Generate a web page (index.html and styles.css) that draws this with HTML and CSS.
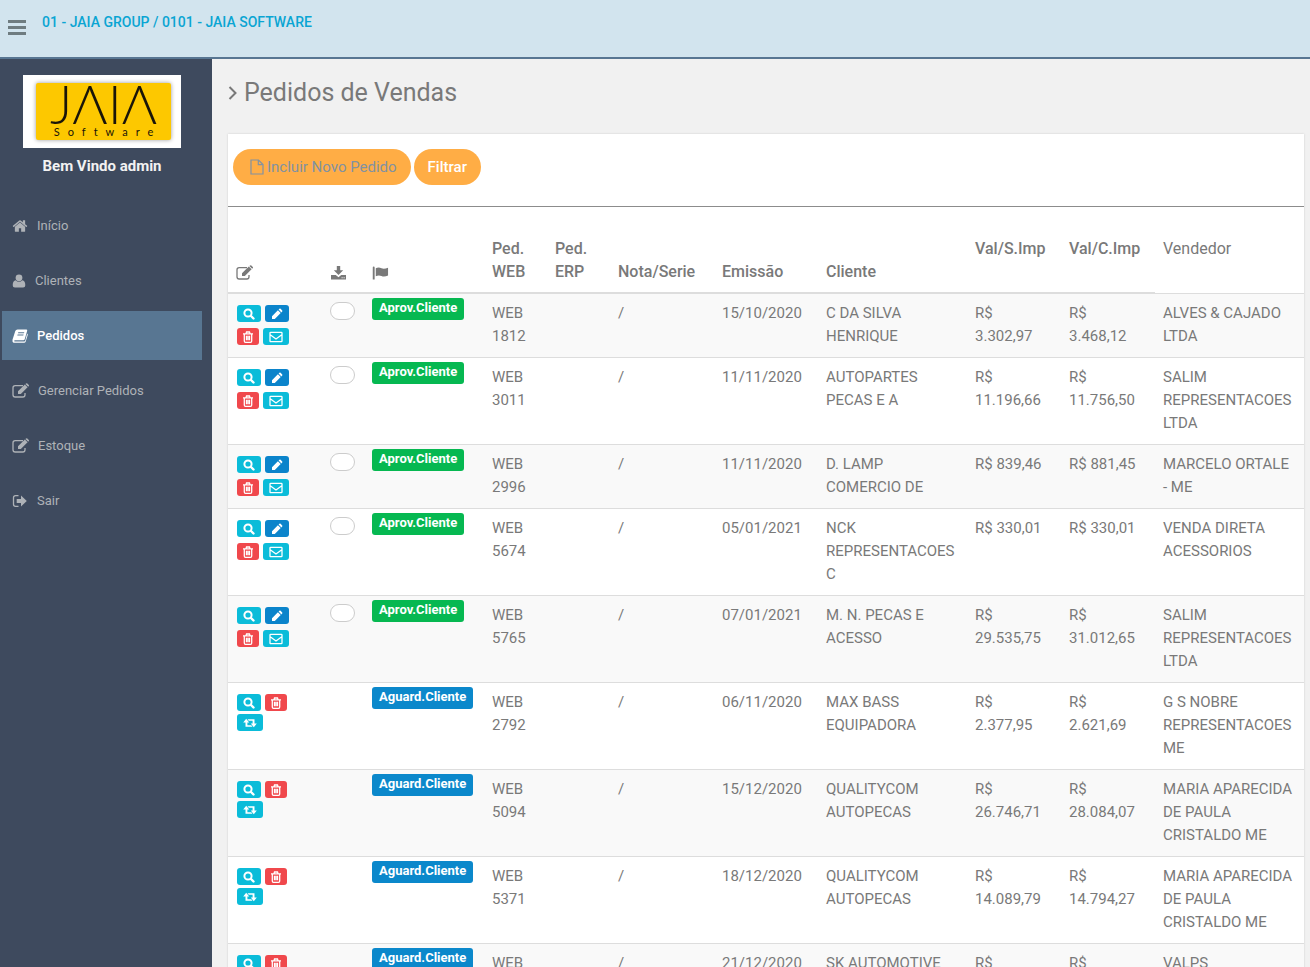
FILE: index.html
```
<!DOCTYPE html>
<html lang="pt-br">
<head>
  <meta charset="UTF-8">
  <meta name="viewport" content="width=device-width, initial-scale=1">
  <title>Pedidos de Vendas</title>
  <link rel="stylesheet" href="styles.css">
</head>
<body>

  <!-- icones -->
  <svg class="sprite" aria-hidden="true">
    <symbol id="i-home" viewBox="0 0 1792 1792"><path d="M1472 992v480q0 26-19 45t-45 19h-384v-384h-256v384h-384q-26 0-45-19t-19-45v-480q0-1 .5-3t.5-3l575-474 575 474q1 2 1 6zm223-69l-62 74q-8 9-21 11h-3q-13 0-21-7l-692-577-692 577q-12 8-24 7-13-2-21-11l-62-74q-8-10-7-23.5t11-21.5l719-599q32-26 76-26t76 26l244 204v-195q0-14 9-23t23-9h192q14 0 23 9t9 23v408l219 182q10 8 11 21.5t-7 23.5z"/></symbol>
    <symbol id="i-user" viewBox="0 0 13 16"><circle cx="6.5" cy="4.8" r="3.4"/><path d="M3.2 7.2Q.2 7.6.2 12.2q0 2.2 2.2 2.2h8.2q2.2 0 2.2-2.2 0-4.6-3-5-1.300 1.600-3.300 1.600t-3.300-1.600z"/></symbol>
    <symbol id="i-book" viewBox="0 0 16 16"><path fill-rule="evenodd" d="M5.500 1.500h8.700q1.300 0 1 1.200l-2.500 8.500q-.3 1-1.400 1H3q-1 0-.8.700.2.600 1 .6h9q.8 0 1-.7l2-7.200q.8.500.5 1.500l-2 6.500q-.4 1.200-1.600 1.200H2.700Q.2 14.800.5 12.200q0-1 .4-1.600L3.300 3q.5-1.400 2.200-1.500zM6.300 4.200l-.3 1h6l.3-1zm-.7 2.300-.3 1h6l.3-1z"/></symbol>
    <symbol id="i-edit" viewBox="0 0 17 16"><path fill="none" stroke="currentColor" stroke-width="1.300" d="M11 2.600H3.200Q1 2.600 1 4.800v7Q1 14 3.200 14h7.600q2.200 0 2.200-2.200V10"/><path d="M6 8.200 12.800 1.500l2.800 2.800-6.800 6.800H6z"/><path d="m13.400 1 .7-.6q.6-.5 1.200 0l1.500 1.500q.5.600 0 1.200l-.6.700z"/></symbol>
    <symbol id="i-sair" viewBox="0 0 15 16"><path fill="none" stroke="currentColor" stroke-width="1.300" d="M6 2.700H3Q1 2.700 1 4.700v6.600q0 2 2 2h3"/><path d="M8.500 2.600 14.300 8l-5.800 5.400V10H4.200V6h4.300z"/></symbol>
    <symbol id="i-angle" viewBox="0 0 10 16"><path fill="none" stroke="currentColor" stroke-width="2" d="m1.500 2 6 6-6 6"/></symbol>
    <symbol id="i-file" viewBox="0 0 14 16"><path fill="none" stroke="currentColor" stroke-width="1.200" d="M1 1h7.500L13 5.500V15H1zM8.300 1v4.700H13"/></symbol>
    <symbol id="i-download" viewBox="0 0 16 16"><path d="M6.300 1h3.400v4.200h3L8 10 3.300 5.200h3z"/><path fill-rule="evenodd" d="M.5 10h4.800L8 12.300 10.700 10h4.800v4.500H.5zm10.600 2.200v1h1v-1zm2 0v1h1v-1z"/></symbol>
    <symbol id="i-flag" viewBox="0 0 18 16"><path d="M.8 2.200a1 1 0 0 1 2 0v12.600h-2zM4 3q3-1.700 6 0 2.600 1.300 7-.6v8.200q-4 2-7 .6-3-1.500-6 .3z"/></symbol>
    <symbol id="i-search" viewBox="0 0 12 12"><circle cx="5" cy="5" r="3.600" fill="none" stroke="currentColor" stroke-width="2"/><path stroke="currentColor" stroke-width="2.400" stroke-linecap="round" d="m8 8 2.500 2.500"/></symbol>
    <symbol id="i-pencil" viewBox="0 0 12 12"><path d="M1 11V8.200l5.900-5.900 2.800 2.800L3.800 11zM7.600 1.600l.8-.8q.6-.5 1.200 0l1.600 1.600q.5.600 0 1.200l-.8.800z"/></symbol>
    <symbol id="i-trash" viewBox="0 0 12 12"><path fill="none" stroke="currentColor" stroke-width="1.300" d="M1 2.800h10M4 2.600l.5-1.600h3L8 2.600M2.300 3v7q0 1.300 1.200 1.300h5q1.200 0 1.200-1.300V3M4.500 4.800v4.400M6 4.800v4.400M7.500 4.800v4.400"/></symbol>
    <symbol id="i-mail" viewBox="0 0 14 12"><path fill="none" stroke="currentColor" stroke-width="1.300" d="M1 2q0-.7.700-.7h10.600q.7 0 .7.700v8q0 .7-.7.700H1.700Q1 10.700 1 10zM1.200 3.800 7 8l5.800-4.200"/></symbol>
    <symbol id="i-retweet" viewBox="0 0 14 10"><path d="M3.200.8 6.200 4.400H4.400v2.800h3.800l1.300 1.600H2.500V4.400H.2zM10.800 9.200 7.800 5.600h1.800V2.800H5.800L4.500 1.200h7v4.400h2.300z"/></symbol>
  </svg>

  <header class="topo">
    <button class="menu" type="button" aria-label="Menu"><span></span><span></span><span></span></button>
    <a class="empresa" href="#">01 - JAIA GROUP / 0101 - JAIA SOFTWARE</a>
  </header>

  <div class="pagina">
    <aside class="lateral">
      <div class="logo">
        <div class="logo-fundo">
          <span class="logo-nome">JΛIΛ</span>
          <span class="logo-sub">Software</span>
        </div>
      </div>
      <p class="bemvindo">Bem Vindo admin</p>
      <nav>
        <a href="#"><svg class="i16"><use href="#i-home"/></svg>Início</a>
        <a href="#"><svg class="i14"><use href="#i-user"/></svg>Clientes</a>
        <a href="#" class="ativo"><svg class="i16"><use href="#i-book"/></svg>Pedidos</a>
        <a href="#"><svg class="i17"><use href="#i-edit"/></svg>Gerenciar Pedidos</a>
        <a href="#"><svg class="i17"><use href="#i-edit"/></svg>Estoque</a>
        <a href="#"><svg class="i16"><use href="#i-sair"/></svg>Sair</a>
      </nav>
    </aside>

    <main class="conteudo">
      <h1><svg><use href="#i-angle"/></svg>Pedidos de Vendas</h1>

      <section class="painel">
        <div class="acoes">
          <button class="btn btn-novo" type="button"><svg><use href="#i-file"/></svg>Incluir Novo Pedido</button>
          <button class="btn" type="button">Filtrar</button>
        </div>

        <table>
          <colgroup>
            <col class="c-acoes"><col class="c-check"><col class="c-status"><col class="c-ped"><col class="c-ped">
            <col class="c-nota"><col class="c-nota"><col><col class="c-valor"><col class="c-valor"><col>
          </colgroup>
          <thead>
            <tr>
              <th aria-label="Ações"><svg class="i17"><use href="#i-edit"/></svg></th>
              <th aria-label="Baixar"><svg class="i17"><use href="#i-download"/></svg></th>
              <th aria-label="Status"><svg class="i17"><use href="#i-flag"/></svg></th>
              <th>Ped. WEB</th>
              <th>Ped. ERP</th>
              <th>Nota/Serie</th>
              <th>Emissão</th>
              <th>Cliente</th>
              <th class="alto">Val/S.Imp</th>
              <th class="alto">Val/C.Imp</th>
              <th class="alto vendedor">Vendedor</th>
            </tr>
          </thead>
          <tbody>
            <tr>
              <td><div class="botoes">
                <button class="mini ciano" aria-label="Ver"><svg><use href="#i-search"/></svg></button>
                <button class="mini azul" aria-label="Editar"><svg><use href="#i-pencil"/></svg></button>
                <button class="mini vermelho" aria-label="Excluir"><svg><use href="#i-trash"/></svg></button>
                <button class="mini ciano largo" aria-label="Email"><svg><use href="#i-mail"/></svg></button>
              </div></td>
              <td><input type="checkbox" aria-label="Pedido 1812"></td>
              <td class="status"><span class="tag aprovado">Aprov.Cliente</span></td>
              <td>WEB 1812</td><td></td><td>/</td><td>15/10/2020</td>
              <td>C DA SILVA<br>HENRIQUE</td>
              <td>R$<br>3.302,97</td><td>R$<br>3.468,12</td>
              <td>ALVES &amp; CAJADO LTDA</td>
            </tr>
            <tr>
              <td><div class="botoes">
                <button class="mini ciano" aria-label="Ver"><svg><use href="#i-search"/></svg></button>
                <button class="mini azul" aria-label="Editar"><svg><use href="#i-pencil"/></svg></button>
                <button class="mini vermelho" aria-label="Excluir"><svg><use href="#i-trash"/></svg></button>
                <button class="mini ciano largo" aria-label="Email"><svg><use href="#i-mail"/></svg></button>
              </div></td>
              <td><input type="checkbox" aria-label="Pedido 3011"></td>
              <td class="status"><span class="tag aprovado">Aprov.Cliente</span></td>
              <td>WEB 3011</td><td></td><td>/</td><td>11/11/2020</td>
              <td>AUTOPARTES<br>PECAS E A</td>
              <td>R$<br>11.196,66</td><td>R$<br>11.756,50</td>
              <td>SALIM REPRESENTACOES LTDA</td>
            </tr>
            <tr>
              <td><div class="botoes">
                <button class="mini ciano" aria-label="Ver"><svg><use href="#i-search"/></svg></button>
                <button class="mini azul" aria-label="Editar"><svg><use href="#i-pencil"/></svg></button>
                <button class="mini vermelho" aria-label="Excluir"><svg><use href="#i-trash"/></svg></button>
                <button class="mini ciano largo" aria-label="Email"><svg><use href="#i-mail"/></svg></button>
              </div></td>
              <td><input type="checkbox" aria-label="Pedido 2996"></td>
              <td class="status"><span class="tag aprovado">Aprov.Cliente</span></td>
              <td>WEB 2996</td><td></td><td>/</td><td>11/11/2020</td>
              <td>D. LAMP<br>COMERCIO DE</td>
              <td>R$ 839,46</td><td>R$ 881,45</td>
              <td>MARCELO ORTALE<br>- ME</td>
            </tr>
            <tr>
              <td><div class="botoes">
                <button class="mini ciano" aria-label="Ver"><svg><use href="#i-search"/></svg></button>
                <button class="mini azul" aria-label="Editar"><svg><use href="#i-pencil"/></svg></button>
                <button class="mini vermelho" aria-label="Excluir"><svg><use href="#i-trash"/></svg></button>
                <button class="mini ciano largo" aria-label="Email"><svg><use href="#i-mail"/></svg></button>
              </div></td>
              <td><input type="checkbox" aria-label="Pedido 5674"></td>
              <td class="status"><span class="tag aprovado">Aprov.Cliente</span></td>
              <td>WEB 5674</td><td></td><td>/</td><td>05/01/2021</td>
              <td>NCK REPRESENTACOES C</td>
              <td>R$ 330,01</td><td>R$ 330,01</td>
              <td>VENDA DIRETA<br>ACESSORIOS</td>
            </tr>
            <tr>
              <td><div class="botoes">
                <button class="mini ciano" aria-label="Ver"><svg><use href="#i-search"/></svg></button>
                <button class="mini azul" aria-label="Editar"><svg><use href="#i-pencil"/></svg></button>
                <button class="mini vermelho" aria-label="Excluir"><svg><use href="#i-trash"/></svg></button>
                <button class="mini ciano largo" aria-label="Email"><svg><use href="#i-mail"/></svg></button>
              </div></td>
              <td><input type="checkbox" aria-label="Pedido 5765"></td>
              <td class="status"><span class="tag aprovado">Aprov.Cliente</span></td>
              <td>WEB 5765</td><td></td><td>/</td><td>07/01/2021</td>
              <td>M. N. PECAS E<br>ACESSO</td>
              <td>R$<br>29.535,75</td><td>R$<br>31.012,65</td>
              <td>SALIM REPRESENTACOES LTDA</td>
            </tr>
            <tr>
              <td><div class="botoes aguarda">
                <button class="mini ciano" aria-label="Ver"><svg><use href="#i-search"/></svg></button>
                <button class="mini vermelho" aria-label="Excluir"><svg><use href="#i-trash"/></svg></button>
                <button class="mini ciano largo" aria-label="Reenviar"><svg><use href="#i-retweet"/></svg></button>
              </div></td>
              <td></td>
              <td class="status"><span class="tag aguardando">Aguard.Cliente</span></td>
              <td>WEB 2792</td><td></td><td>/</td><td>06/11/2020</td>
              <td>MAX BASS<br>EQUIPADORA</td>
              <td>R$<br>2.377,95</td><td>R$<br>2.621,69</td>
              <td>G S NOBRE REPRESENTACOES ME</td>
            </tr>
            <tr>
              <td><div class="botoes aguarda">
                <button class="mini ciano" aria-label="Ver"><svg><use href="#i-search"/></svg></button>
                <button class="mini vermelho" aria-label="Excluir"><svg><use href="#i-trash"/></svg></button>
                <button class="mini ciano largo" aria-label="Reenviar"><svg><use href="#i-retweet"/></svg></button>
              </div></td>
              <td></td>
              <td class="status"><span class="tag aguardando">Aguard.Cliente</span></td>
              <td>WEB 5094</td><td></td><td>/</td><td>15/12/2020</td>
              <td>QUALITYCOM<br>AUTOPECAS</td>
              <td>R$<br>26.746,71</td><td>R$<br>28.084,07</td>
              <td>MARIA APARECIDA<br>DE PAULA<br>CRISTALDO ME</td>
            </tr>
            <tr>
              <td><div class="botoes aguarda">
                <button class="mini ciano" aria-label="Ver"><svg><use href="#i-search"/></svg></button>
                <button class="mini vermelho" aria-label="Excluir"><svg><use href="#i-trash"/></svg></button>
                <button class="mini ciano largo" aria-label="Reenviar"><svg><use href="#i-retweet"/></svg></button>
              </div></td>
              <td></td>
              <td class="status"><span class="tag aguardando">Aguard.Cliente</span></td>
              <td>WEB 5371</td><td></td><td>/</td><td>18/12/2020</td>
              <td>QUALITYCOM<br>AUTOPECAS</td>
              <td>R$<br>14.089,79</td><td>R$<br>14.794,27</td>
              <td>MARIA APARECIDA<br>DE PAULA<br>CRISTALDO ME</td>
            </tr>
            <tr>
              <td><div class="botoes aguarda">
                <button class="mini ciano" aria-label="Ver"><svg><use href="#i-search"/></svg></button>
                <button class="mini vermelho" aria-label="Excluir"><svg><use href="#i-trash"/></svg></button>
                <button class="mini ciano largo" aria-label="Reenviar"><svg><use href="#i-retweet"/></svg></button>
              </div></td>
              <td></td>
              <td class="status"><span class="tag aguardando">Aguard.Cliente</span></td>
              <td>WEB</td><td></td><td>/</td><td>21/12/2020</td>
              <td>SK AUTOMOTIVE</td>
              <td>R$</td><td>R$</td>
              <td>VALPS</td>
            </tr>
          </tbody>
        </table>
      </section>
    </main>
  </div>

</body>
</html>
```
FILE: styles.css
```
* {
  box-sizing: border-box;
}
html {
  scrollbar-width: none;
}
body {
  margin: 0;
  min-height: 100vh;
  display: flex;
  flex-direction: column;
  font-family: Roboto, "Liberation Sans", sans-serif;
  font-size: 15px;
  line-height: 23px;
  color: #797979;
  background: #f1f1f1;
}
a {
  text-decoration: none;
}
button {
  border: none;
  font-family: inherit;
  cursor: pointer;
}
svg {
  fill: currentColor;
  flex: none;
}
.sprite {
  display: none;
}
.i14 {
  width: 14px;
  height: 16px;
}
.i16 {
  width: 16px;
  height: 16px;
}
.i17 {
  width: 17px;
  height: 16px;
}

/* topo */
.topo {
  display: flex;
  align-items: flex-start;
  gap: 16px;
  height: 59px;
  padding: 11px 8px;
  background: #d2e4ee;
  border-bottom: 2px solid #587692;
}
.menu {
  display: flex;
  flex-direction: column;
  gap: 3px;
  width: 18px;
  margin-top: 9px;
  padding: 0;
  background: none;
}
.menu span {
  height: 3px;
  background: #6f7c80;
}
.empresa {
  color: #0aa5d3;
  font-weight: 500;
  font-size: 14px;
}

/* menu lateral */
.pagina {
  display: flex;
  flex: 1;
}
.lateral {
  flex: none;
  width: 212px;
  padding-top: 16px;
  background: #3e4a5e;
}
.logo {
  width: 158px;
  height: 73px;
  margin-left: 23px;
  padding: 8px 10px 8px 13px;
  background: #fff;
}
.logo-fundo {
  display: flex;
  flex-direction: column;
  align-items: center;
  height: 57px;
  background: #fdc800;
  color: #1a1508;
  border-radius: 2px;
  box-shadow: 0 0 4px #9a9a9a;
}
.logo-nome {
  font-family: Lato, sans-serif;
  font-weight: 300;
  font-size: 54px;
  line-height: 42px;
}
.logo-sub {
  font-family: Lato, sans-serif;
  font-size: 11px;
  line-height: 14px;
  letter-spacing: 8px;
  padding-left: 8px;
}
.bemvindo {
  width: 204px;
  margin: 7px 0 23px;
  text-align: center;
  color: #f2f2f2;
  font-weight: 700;
}
nav {
  display: flex;
  flex-direction: column;
  gap: 6px;
  padding: 0 10px 0 2px;
}
nav a {
  display: flex;
  align-items: center;
  gap: 9px;
  height: 49px;
  padding-left: 10px;
  color: #aeb2b7;
  font-size: 13px;
}
nav a.ativo {
  background: #587692;
  color: #fff;
  font-weight: 500;
}

/* conteudo */
.conteudo {
  flex: 1;
  min-width: 0;
  padding: 16px 6px 0 16px;
}
h1 {
  display: flex;
  align-items: center;
  gap: 6px;
  margin: 0 0 23px;
  font-size: 25px;
  font-weight: 400;
  line-height: 36px;
}
h1 svg {
  width: 10px;
  height: 16px;
}
.painel {
  background: #fff;
  box-shadow: 0 0 2px #ccc;
}
.acoes {
  display: flex;
  gap: 3px;
  padding: 15px 5px 21px;
  border-bottom: 1px solid #8c8c8c;
}
.btn {
  display: flex;
  align-items: center;
  gap: 3px;
  height: 36px;
  padding: 0 14px;
  border-radius: 18px;
  background: #ffad45;
  color: #fff;
  font-size: 15px;
  font-weight: 500;
}
.btn-novo {
  padding-left: 17px;
  color: #8292a2;
  font-weight: 400;
}
.btn-novo svg {
  width: 14px;
  height: 16px;
}

/* tabela */
table {
  width: 100%;
  margin-top: 22px;
  table-layout: fixed;
  border-collapse: separate;
  border-spacing: 0;
}
.c-acoes {
  width: 94px;
}
.c-check {
  width: 42px;
}
.c-status {
  width: 120px;
}
.c-ped {
  width: 63px;
}
.c-nota {
  width: 104px;
}
.c-valor {
  width: 94px;
}
th {
  padding: 8px 8px 9px;
  border-bottom: 2px solid #ddd;
  text-align: left;
  vertical-align: bottom;
  font-size: 16px;
  font-weight: 500;
}
th svg {
  display: block;
  margin-bottom: 2px;
}
.alto {
  vertical-align: top;
}
.vendedor {
  font-weight: 400;
  border-bottom-width: 1px;
}
td {
  padding: 8px 8px 9px;
  border-bottom: 1px solid #ddd;
  vertical-align: top;
}
tbody tr:nth-child(odd) {
  background: #f9f9f9;
}
.botoes {
  display: flex;
  flex-wrap: wrap;
  gap: 6px 4px;
  width: 54px;
  padding: 3px 0 0 1px;
}
.aguarda {
  row-gap: 3px;
}
.mini {
  display: flex;
  align-items: center;
  justify-content: center;
  width: 24px;
  height: 17px;
  padding: 0;
  border-radius: 3px;
  color: #fff;
}
.mini svg {
  width: 12px;
  height: 12px;
}
.ciano {
  background: #0bbcd9;
}
.azul {
  background: #0b84cb;
}
.vermelho {
  width: 22px;
  background: #f0484c;
}
.largo {
  width: 26px;
}
.largo svg {
  width: 14px;
}
input[type="checkbox"] {
  appearance: none;
  display: block;
  width: 25px;
  height: 18px;
  margin: 0;
  border: 1px solid #ccc;
  border-radius: 9px;
  background: #fff;
}
.status {
  padding-top: 4px;
}
.tag {
  display: inline-block;
  padding: 0 7px 2px;
  border-radius: 3px;
  color: #fff;
  font-size: 13px;
  font-weight: 700;
  line-height: 20px;
  vertical-align: top;
}
.aprovado {
  background: #06b851;
}
.aguardando {
  background: #0b88cb;
}
```
